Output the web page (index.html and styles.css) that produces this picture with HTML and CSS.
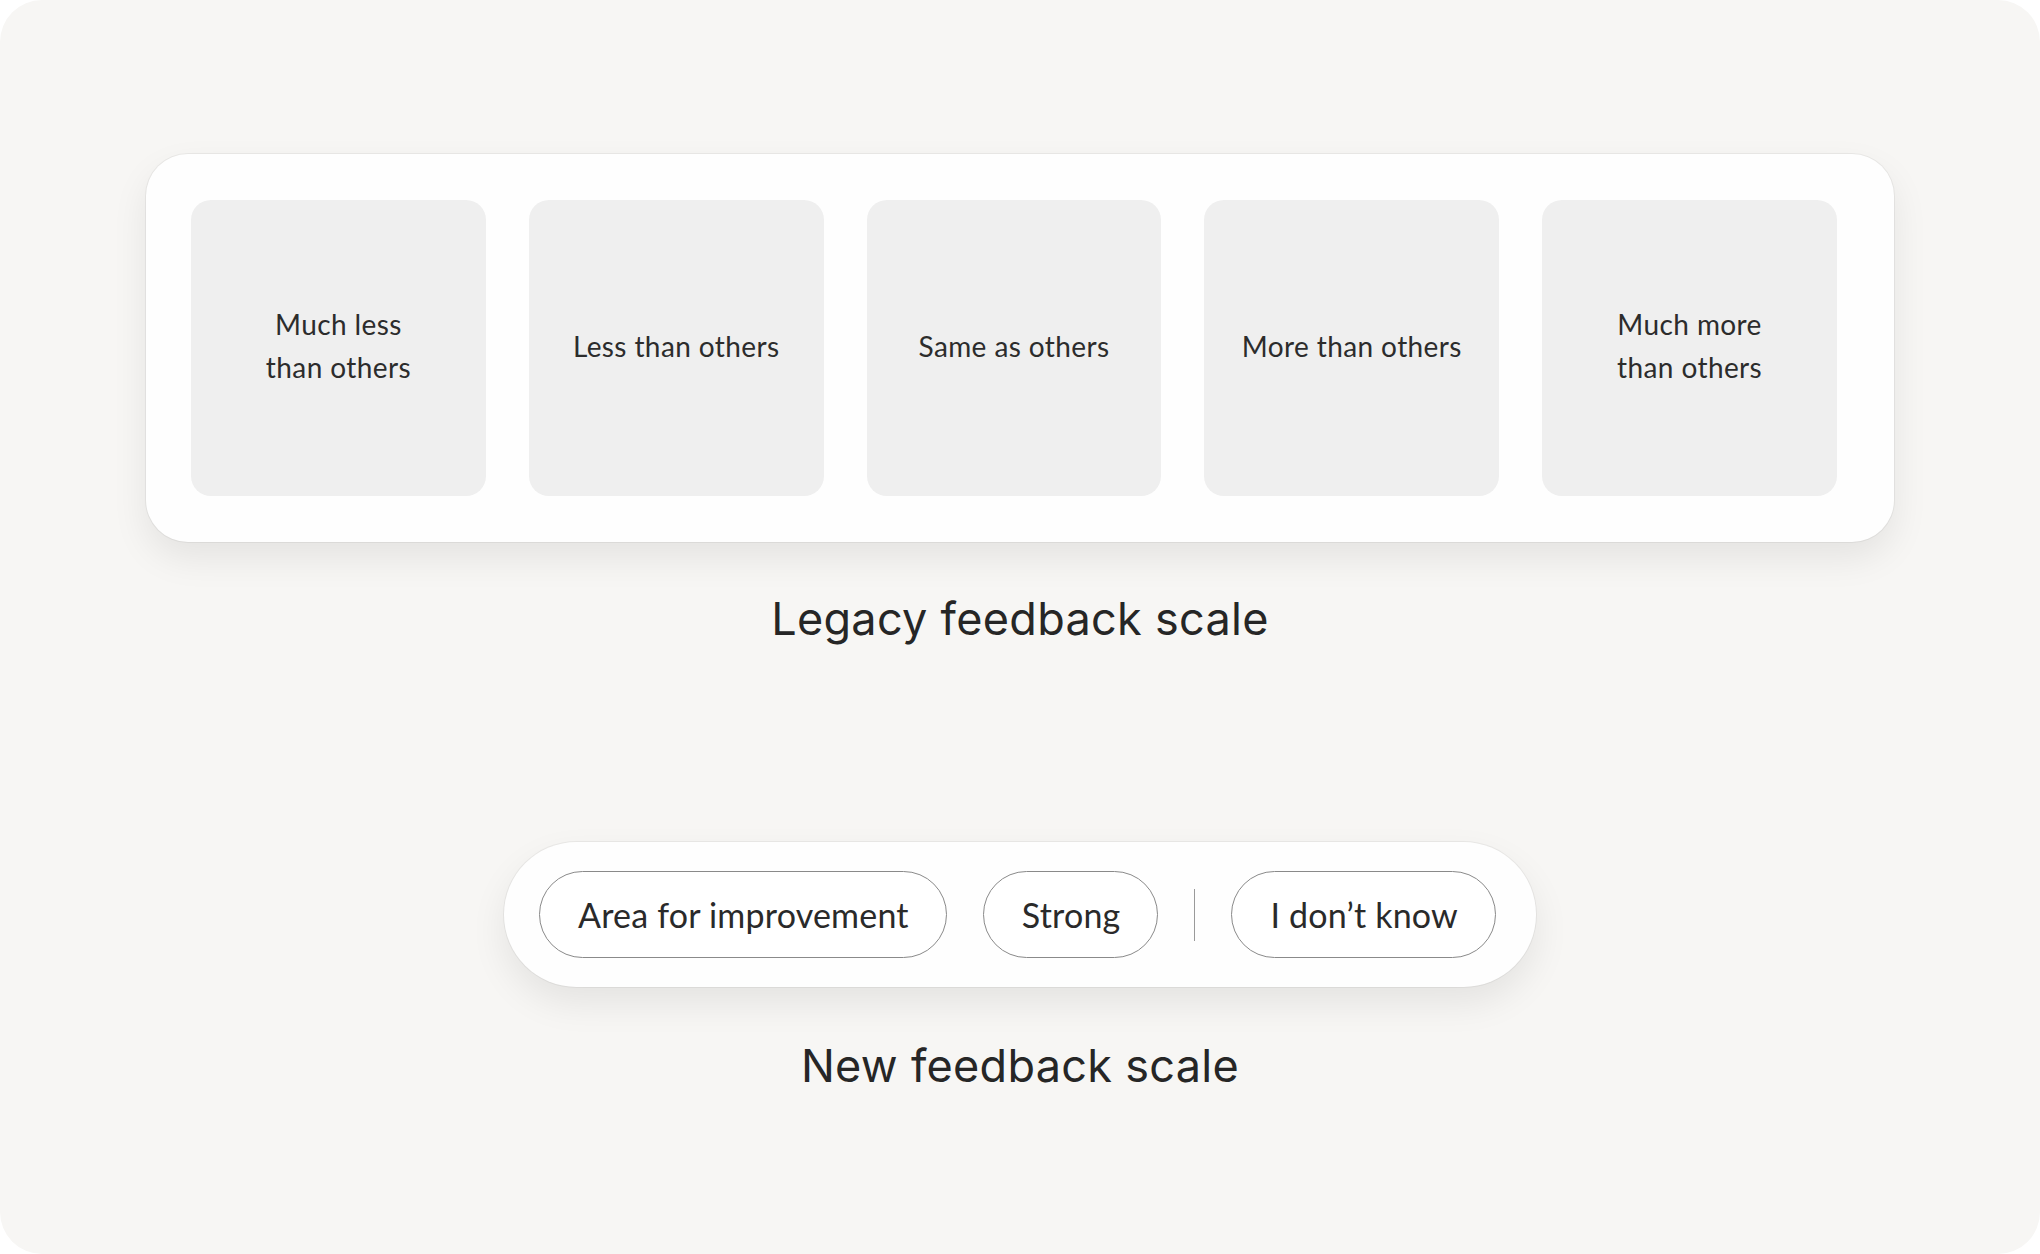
FILE: index.html
```html
<!DOCTYPE html>
<html lang="en">
<head>
    <meta charset="UTF-8">
    <meta name="viewport" content="width=device-width, initial-scale=1.0">
    <title>Feedback scales</title>
    <link rel="stylesheet" href="styles.css">
</head>
<body>
    <div class="frame">
        <div class="panel legacy">
            <div class="tile">Much less<br>than others</div>
            <div class="tile">Less than others</div>
            <div class="tile">Same as others</div>
            <div class="tile">More than others</div>
            <div class="tile">Much more<br>than others</div>
        </div>
        <h2 class="caption">Legacy feedback scale</h2>

        <div class="panel pills">
            <button class="pill">Area for improvement</button>
            <button class="pill">Strong</button>
            <span class="divider"></span>
            <button class="pill">I don’t know</button>
        </div>
        <h2 class="caption caption-new">New feedback scale</h2>
    </div>
</body>
</html>
```

FILE: styles.css
```css
body {
    margin: 0;
    background: #ffffff;
    font-family: 'Lato', 'Liberation Sans', sans-serif;
    color: #2a2a2a;
}

.frame {
    width: 2040px;
    height: 1254px;
    box-sizing: border-box;
    padding-top: 154px;
    background: #f7f6f4;
    border-radius: 42px;
    display: flex;
    flex-direction: column;
    align-items: center;
}

.panel {
    background: #fefefe;
    box-sizing: border-box;
    box-shadow: 0 0 0 1px rgba(0, 0, 0, 0.05), 0 16px 36px rgba(0, 0, 0, 0.08);
}

.legacy {
    width: 1748px;
    height: 388px;
    padding: 46px 57px 46px 45px;
    border-radius: 42px;
    display: grid;
    grid-template-columns: repeat(5, 1fr);
    gap: 43px;
}

.tile {
    background: #efefef;
    border-radius: 20px;
    padding-bottom: 4px;
    display: flex;
    align-items: center;
    justify-content: center;
    text-align: center;
    font-size: 28px;
    letter-spacing: 0.4px;
    line-height: 43px;
    color: #2c2c2c;
}

.caption {
    margin: 50px 0 0;
    font-family: 'Inter', 'Liberation Sans', sans-serif;
    font-weight: 400;
    font-size: 45px;
    letter-spacing: 0.3px;
    line-height: 54px;
    color: #262626;
}

.pills {
    margin-top: 196px;
    height: 145px;
    padding: 0 40px 0 35px;
    border-radius: 73px;
    display: flex;
    align-items: center;
    gap: 36px;
}

.pill {
    height: 87px;
    padding: 0 37px 0 38px;
    border: 1px solid #8a8a8a;
    border-radius: 44px;
    background: #ffffff;
    font-family: inherit;
    font-size: 34px;
    letter-spacing: 0.2px;
    color: #2a2a2a;
    cursor: pointer;
}

.divider {
    width: 1px;
    height: 52px;
    background: #9a9a9a;
}

.caption-new {
    margin-top: 52px;
}
```
